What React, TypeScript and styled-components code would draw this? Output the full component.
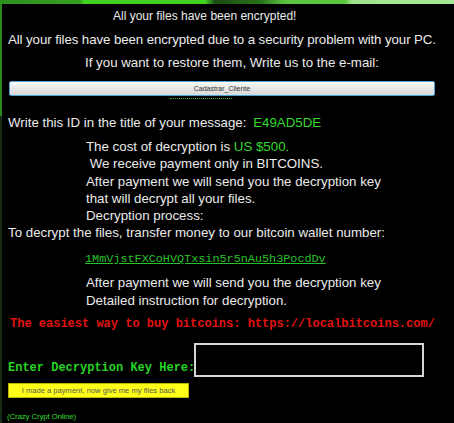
import React from "react";
import styled, { createGlobalStyle } from "styled-components";

const Global = createGlobalStyle`
  html, body { margin: 0; padding: 0; background: #000; }
  body { width: 454px; height: 423px; overflow: hidden; }
`;

const Frame = styled.div`
  width: 454px;
  height: 423px;
  background: #000;
  display: flex;
  flex-direction: column;
  overflow: hidden;
  font-family: "Liberation Sans", Arial, sans-serif;
`;

const TopBand = styled.div`
  height: 4px;
  flex: none;
  background: linear-gradient(
    90deg,
    #2f8f1e 0px,
    #34a020 80px,
    #3fd41f 84px,
    #3fd41f 205px,
    #1d4a14 215px,
    #27721a 260px,
    #5bc43f 285px,
    #58c83c 345px,
    #9ee48c 352px,
    #a7e898 454px
  );
`;

const Panel = styled.div`
  flex: 1;
  position: relative;
  display: flex;
  flex-direction: column;
  background-color: #000;
  background-image: linear-gradient(#2c8a1c, #2c8a1c), linear-gradient(#1a2a16, #1a2a16);
  background-size: 2px 112px, 2px 100%;
  background-position: 0 0, 0 112px;
  background-repeat: no-repeat;
  color: #ebebeb;
  font-size: 13.3px;
`;

const Line = styled.div<{ $left?: number; $top?: number; $size?: number; $spacing?: number }>`
  padding-left: ${(p) => p.$left ?? 8}px;
  margin-top: ${(p) => p.$top ?? 0}px;
  font-size: ${(p) => p.$size ?? 13.3}px;
  letter-spacing: ${(p) => p.$spacing ?? 0}px;
  line-height: 17px;
  white-space: pre;
`;

const Block = styled.div<{ $left: number; $top: number }>`
  padding-left: ${(p) => p.$left}px;
  margin-top: ${(p) => p.$top}px;
  line-height: 17.25px;
  white-space: pre;
`;

const Green = styled.span<{ $gap?: number }>`
  color: #35d82e;
  margin-left: ${(p) => p.$gap ?? 0}px;
`;

const EmailBox = styled.div`
  margin: 10px 0 0 9px;
  width: 424px;
  height: 13px;
  border: 1px solid #4aa3d8;
  border-radius: 2px;
  background: linear-gradient(#fbfbfb, #e6e6e6 55%, #d8d8d8);
  color: #333;
  font-size: 7px;
  line-height: 13px;
  text-align: center;
`;

const HiddenLink = styled.div`
  height: 3px;
  overflow: hidden;
  display: flex;
  justify-content: flex-start;
  padding-left: 170px;
`;

const HiddenLinkText = styled.span`
  display: block;
  width: 62px;
  height: 1px;
  margin-top: 1px;
  border-bottom: 1px dotted #2fae2a;
`;

const Wallet = styled.div`
  margin: 10px 0 0 85px;
  font-family: "Liberation Mono", "Courier New", monospace;
  font-size: 11.8px;
  line-height: 17px;
  color: #28c128;
  text-decoration: underline;
`;

const RedLine = styled.div`
  margin: 7px 0 0 10px;
  font-family: "Liberation Mono", "Courier New", monospace;
  font-weight: bold;
  font-size: 12px;
  line-height: 17px;
  color: #e01212;
  white-space: pre;
`;

const KeyRow = styled.div`
  margin: 10px 0 0 8px;
  display: flex;
  align-items: flex-end;
`;

const KeyLabel = styled.div`
  font-family: "Liberation Mono", "Courier New", monospace;
  font-weight: bold;
  font-size: 12px;
  line-height: 17px;
  color: #25d322;
  width: 186px;
  white-space: pre;
`;

const KeyInput = styled.input`
  width: 226px;
  height: 30px;
  box-sizing: content-box;
  padding: 0;
  margin: 0;
  background: #000;
  border: 2px solid #d6d6d6;
  outline: none;
  color: #fff;
`;

const PayButton = styled.button`
  margin: 6px 0 0 8px;
  width: 181px;
  height: 15px;
  padding: 0;
  background: #ffff1a;
  border: 1px solid #b8b800;
  color: #555;
  font-family: "Liberation Sans", Arial, sans-serif;
  font-size: 7.6px;
  text-align: center;
  align-self: flex-start;
`;

const Footer = styled.div`
  margin: 13px 0 0 7px;
  font-size: 8px;
  line-height: 12px;
  color: #33d52e;
  letter-spacing: -0.2px;
`;

export default function App() {
  return (
    <Frame>
      <Global />
      <TopBand />
      <Panel>
        <Line $left={113} $top={4} $size={12}>All your files have been encrypted!</Line>
        <Line $top={6} $size={13.3} $spacing={-0.1}>All your files have been encrypted due to a security problem with your PC.</Line>
        <Line $left={85} $top={6}>If you want to restore them, Write us to the e-mail:</Line>
        <EmailBox>Cadastrar_Cliente</EmailBox>
        <HiddenLink>
          <HiddenLinkText />
        </HiddenLink>
        <Line $top={15}>
          Write this ID in the title of your message: <Green $gap={3}>E49AD5DE</Green>
        </Line>
        <Block $left={86} $top={7}>
          <div>
            The cost of decryption is <Green>US $500.</Green>
          </div>
          <div> We receive payment only in BITCOINS.</div>
          <div>After payment we will send you the decryption key</div>
          <div>that will decrypt all your files.</div>
          <div>Decryption process:</div>
        </Block>
        <Line>To decrypt the files, transfer money to our bitcoin wallet number:</Line>
        <Wallet>1MmVjstFXCoHVQTxsin5r5nAu5h3PocdDv</Wallet>
        <Block $left={86} $top={6}>
          <div>After payment we will send you the decryption key</div>
          <div>Detailed instruction for decryption.</div>
        </Block>
        <RedLine>The easiest way to buy bitcoins: https://localbitcoins.com/</RedLine>
        <KeyRow>
          <KeyLabel>Enter Decryption Key Here:</KeyLabel>
          <KeyInput type="text" aria-label="Decryption key" />
        </KeyRow>
        <PayButton>I made a payment,  now give me my files back</PayButton>
        <Footer>(Crazy Crypt Online)</Footer>
      </Panel>
    </Frame>
  );
}
